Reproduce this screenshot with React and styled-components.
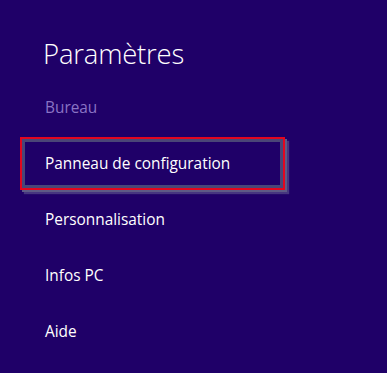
import React from "react";
import styled, { createGlobalStyle } from "styled-components";

const GlobalStyle = createGlobalStyle`
  html, body {
    margin: 0;
    padding: 0;
    background: #1f0068;
  }
  * {
    box-sizing: border-box;
  }
`;

const Panel = styled.div`
  width: 387px;
  height: 373px;
  background: #1f0068;
  color: #ffffff;
  font-family: "Open Sans", "Noto Sans", sans-serif;
  overflow: hidden;
  padding-top: 34px;
`;

const Title = styled.h1`
  margin: 0 0 0 43px;
  height: 46px;
  font-size: 27.5px;
  font-weight: 300;
  line-height: 40px;
  letter-spacing: -0.2px;
`;

const Menu = styled.ul`
  list-style: none;
  margin: 0;
  padding: 0 0 0 20px;
`;

const Item = styled.li`
  display: flex;
  align-items: center;
  height: ${(p) => (p.$selected ? "53px" : "56px")};
  width: 265px;
  margin: ${(p) => (p.$selected ? "1px 0 2px" : "0")};
  padding-left: ${(p) => (p.$selected ? "23px" : "25px")};
  padding-bottom: ${(p) => (p.$selected ? "1px" : "2px")};
  font-size: 15.4px;
  color: ${(p) => (p.$muted ? "#8a73c4" : "#ffffff")};
  border: ${(p) => (p.$selected ? "2px solid #e3061f" : "none")};
  box-shadow: ${(p) =>
    p.$selected
      ? "inset 0 0 0 3px #4a4577, 2px 2px 0 #5d5a86, 4px 4px 1px rgba(110,105,150,0.5)"
      : "none"};
`;

const items = [
  { label: "Bureau", muted: true },
  { label: "Panneau de configuration", selected: true },
  { label: "Personnalisation" },
  { label: "Infos PC" },
  { label: "Aide" },
];

export default function App() {
  return (
    <>
      <GlobalStyle />
      <Panel>
        <Title>Paramètres</Title>
        <Menu>
          {items.map((item) => (
            <Item key={item.label} $muted={item.muted} $selected={item.selected}>
              {item.label}
            </Item>
          ))}
        </Menu>
      </Panel>
    </>
  );
}
